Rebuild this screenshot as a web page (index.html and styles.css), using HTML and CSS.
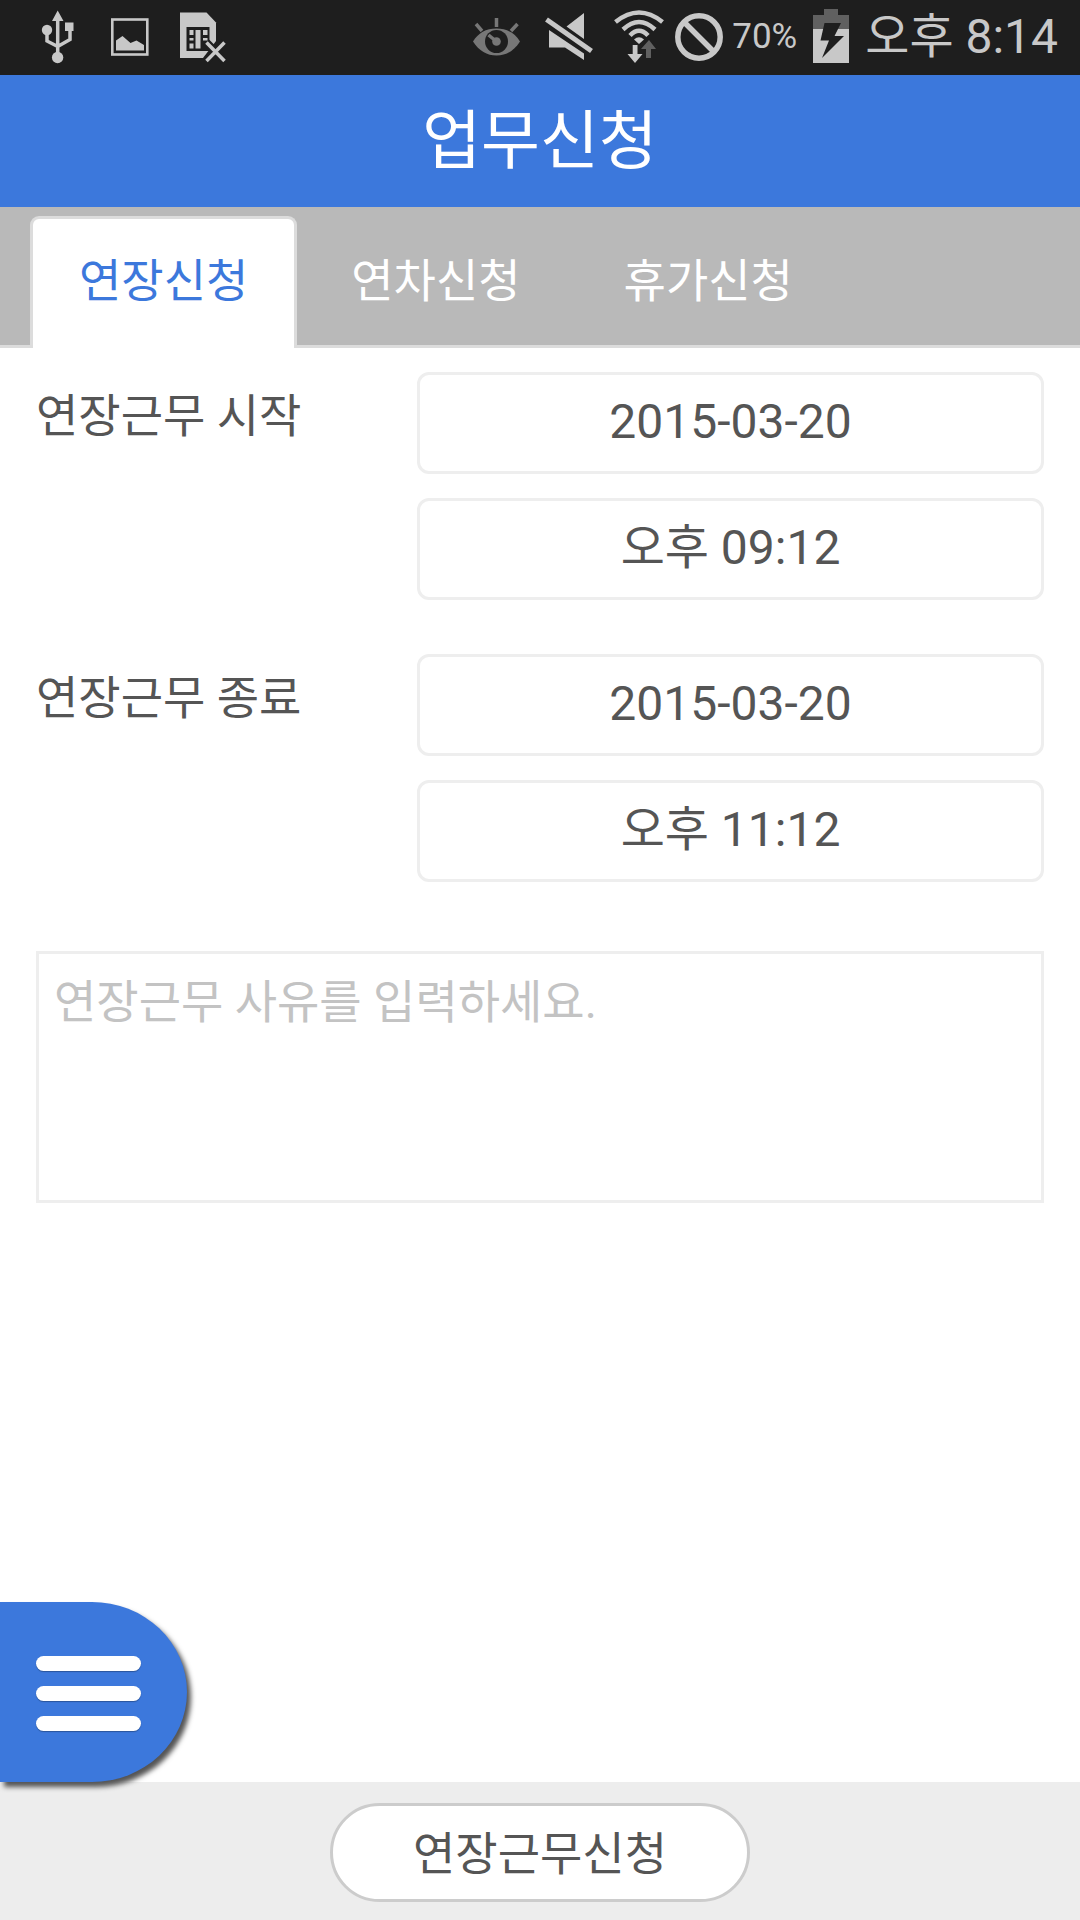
FILE: index.html
```html
<!DOCTYPE html>
<html lang="ko">
<head>
    <meta charset="UTF-8">
    <meta name="viewport" content="width=device-width, initial-scale=1.0">
    <title>업무신청</title>
    <link rel="stylesheet" href="styles.css">
</head>
<body>
    <div class="status-bar">
        <div class="notifications">
            <svg width="39" height="54" viewBox="41 10 39 54" aria-hidden="true">
                <path class="line" d="M57.7 18V54M47 30V41L57.7 46.5M70 29V39.5L57.7 46.5" stroke-width="3.5"/>
                <path class="fill" d="M57.7 10.5L63.5 21H52ZM65 22.5H73.5V31H65Z"/>
                <circle class="fill" cx="47" cy="30" r="5.2"/>
                <circle class="fill" cx="57.6" cy="57.5" r="5.7"/>
            </svg>
            <svg width="38" height="54" viewBox="111 10 38 54" aria-hidden="true">
                <rect class="line" x="112.3" y="19.5" width="35" height="35" stroke-width="2.6"/>
                <path class="fill" d="M116 50.5V40.5L122.5 36L130.5 43L136.5 40.5L144 45V50.5Z"/>
            </svg>
            <svg width="47" height="54" viewBox="180 10 47 54" aria-hidden="true">
                <path class="fill" d="M180 12.5H206.5L216 22.5V41L203 58H180Z"/>
                <path class="hole" d="M186.5 27H209.5V51H186.5Z"/>
                <path class="fill" d="M189.5 30H193.5V35H189.5ZM189.5 38H193.5V40.5H189.5ZM189.5 43.5H193.5V48.5H189.5ZM195.5 30H200.5V48.5H195.5ZM203 30H207.5V35H203ZM203 38H207.5V40.5H203Z"/>
                <path class="hole-line" d="M206.5 42.5L224.5 61M224.5 42.5L206.5 61" stroke-width="8"/>
                <path class="line" d="M206.5 42.5L224.5 61M224.5 42.5L206.5 61" stroke-width="3.5"/>
            </svg>
        </div>
        <div class="system">
            <svg class="icon-eye" width="48" height="54" viewBox="473 10 48 54" aria-hidden="true">
                <path class="dim" d="M474 41.5C479 33 487 28.5 497.5 28.5C508 28.5 516 33 521 41.5C515 51 507 55.5 497.5 55.5C488 55.5 480 51 474 41.5Z"/>
                <circle class="hole" cx="497.5" cy="41.5" r="11.5"/>
                <circle class="dim" cx="497.5" cy="41.5" r="4.3"/>
                <path class="dim-line" d="M497.5 41.5L489.5 35M497.5 18V27M477 24L483 31M518.5 24L512 31" stroke-width="3.5"/>
            </svg>
            <svg class="icon-mute" width="50" height="54" viewBox="545 10 50 54" aria-hidden="true">
                <path class="fill" d="M585 13V39L567.5 26.5ZM550 30L585 53.5V60L566 47.5H550Z"/>
                <path class="line" d="M547.5 19.5L592.5 51" stroke-width="5"/>
            </svg>
            <svg class="icon-wifi" width="50" height="54" viewBox="614 9 50 54" aria-hidden="true">
                <path class="line" d="M615.5 21Q639 2 662.5 21M623 28.5Q639 13.5 655 28.5M630 34.5Q639 25 648 34.5" stroke-width="4.5"/>
                <path class="fill" d="M634 38.5Q639 34 644 38.5L639 43Z"/>
                <path class="dim-arrow" d="M649 39L656 48H651V57H646V48H641Z"/>
                <path class="fill" d="M632.7 44H637.5V53H642.5L635 62L627.5 53H632.7Z"/>
            </svg>
            <svg class="icon-block" width="48" height="54" viewBox="675 9 48 54" aria-hidden="true">
                <circle class="line" cx="699" cy="36" r="21.2" stroke-width="5.5"/>
                <path class="line" d="M684 21L714 51" stroke-width="5.5"/>
            </svg>
            <span class="battery-level">70%</span>
            <svg class="icon-battery" width="36" height="56" viewBox="813 8 36 56" aria-hidden="true">
                <path class="battery-empty" d="M824 8H838V14H849V28H813V14H824Z"/>
                <path class="fill" d="M813 28H849V62H813Z"/>
                <path class="hole" d="M824.5 22H841L834.5 35H844L822 57L829 39.5H820.5Z"/>
            </svg>
            <time class="clock">오후 8:14</time>
        </div>
    </div>

    <header class="title-bar">
        <h1>업무신청</h1>
    </header>

    <nav class="tabs">
        <a class="tab active" href="#overtime">연장신청</a>
        <a class="tab" href="#annual">연차신청</a>
        <a class="tab" href="#vacation">휴가신청</a>
    </nav>

    <form class="request-form" id="overtime">
        <div class="period">
            <label for="start-date">연장근무 시작</label>
            <div class="fields">
                <input class="date" type="text" id="start-date" value="2015-03-20" readonly>
                <input class="time" type="text" id="start-time" value="오후 09:12" aria-label="연장근무 시작 시간" readonly>
            </div>
        </div>
        <div class="period">
            <label for="end-date">연장근무 종료</label>
            <div class="fields">
                <input class="date" type="text" id="end-date" value="2015-03-20" readonly>
                <input class="time" type="text" id="end-time" value="오후 11:12" aria-label="연장근무 종료 시간" readonly>
            </div>
        </div>
        <textarea class="reason" placeholder="연장근무 사유를 입력하세요." aria-label="연장근무 사유"></textarea>
    </form>

    <footer class="bottom-bar">
        <button class="menu-button" type="button" aria-label="메뉴">
            <span></span>
            <span></span>
            <span></span>
        </button>
        <button class="submit-button" type="submit" form="overtime">연장근무신청</button>
    </footer>
</body>
</html>
```

FILE: styles.css
```css
:root {
    --blue: #3c78dc;
    --text: #555;
    --line: #eee;
    --status: #1e1e1e;
    --status-icon: #c8c8c8;
}

* {
    box-sizing: border-box;
}

body {
    margin: 0;
    min-height: 100vh;
    display: flex;
    flex-direction: column;
    background-color: white;
    color: var(--text);
    font-family: Roboto, "Noto Sans CJK KR", sans-serif;
    font-size: 46px;
}

input, textarea, button {
    font-family: inherit;
    color: inherit;
}

/* status bar */
.status-bar {
    height: 75px;
    padding: 0 22px 2px 41px;
    display: flex;
    justify-content: space-between;
    background-color: var(--status);
    color: var(--status-icon);
}

.notifications, .system {
    display: flex;
    align-items: center;
}

.notifications {
    gap: 31px;
}

.icon-eye {
    margin-right: 24px;
}

.icon-mute {
    margin-right: 20px;
}

.icon-wifi {
    margin-right: 11px;
}

.icon-block {
    margin-right: 9px;
}

.icon-battery {
    margin: 0 16px;
}

.fill {
    fill: var(--status-icon);
}

.line, .hole-line, .dim-line {
    fill: none;
    stroke: var(--status-icon);
}

.hole {
    fill: var(--status);
}

.hole-line {
    stroke: var(--status);
}

.dim {
    fill: #777;
}

.dim-line {
    stroke: #777;
}

.dim-arrow, .battery-empty {
    fill: #606060;
}

.battery-level {
    font-size: 35px;
    line-height: 72px;
}

.clock {
    font-size: 48px;
    line-height: 72px;
}

/* title */
.title-bar {
    height: 132px;
    display: flex;
    justify-content: center;
    background-color: var(--blue);
    color: white;
}

.title-bar h1 {
    margin: 0;
    font-size: 64px;
    font-weight: 400;
    line-height: 134px;
}

/* tabs */
.tabs {
    height: 141px;
    padding: 9px 30px 0;
    display: flex;
    gap: 5px;
    background-color: #b9b9b9;
    box-shadow: inset 0 -3px #dcdcdc;
}

.tab {
    padding: 0 46px;
    border: 3px solid transparent;
    border-bottom: 0;
    border-radius: 9px 9px 0 0;
    color: white;
    line-height: 124px;
    text-decoration: none;
}

.tab.active {
    border-color: #dcdcdc;
    background-color: white;
    color: var(--blue);
}

/* form */
.request-form {
    flex: 1;
    padding: 24px 36px;
}

.period {
    margin-bottom: 54px;
    display: flex;
    justify-content: space-between;
}

.period label {
    line-height: 88px;
}

.fields {
    width: 62.2%;
    display: flex;
    flex-direction: column;
    gap: 24px;
}

.fields input {
    width: 100%;
    height: 102px;
    border: 3px solid var(--line);
    border-radius: 12px;
    background-color: white;
    font-size: 48px;
    text-align: center;
}

.fields .date {
    padding: 0 0 4px;
}

/* the hangul font sits lower in its line than Roboto */
.fields .time {
    padding: 0 0 12px;
}

.reason {
    display: block;
    width: 100%;
    height: 252px;
    margin-top: 69px;
    padding: 12px 15px;
    border: 3px solid var(--line);
    background-color: white;
    font-size: 46px;
    line-height: 72px;
    resize: none;
}

.reason::placeholder {
    color: #c3c3c3;
}

/* bottom bar */
.bottom-bar {
    position: relative;
    height: 138px;
    padding-top: 2px;
    display: flex;
    align-items: center;
    justify-content: center;
    background-color: #ededed;
}

.submit-button {
    height: 99px;
    padding: 0 80px 4px;
    border: 3px solid #ccc;
    border-radius: 50px;
    background-color: white;
    font-size: 46px;
}

/* floats over the form, just above the bottom bar */
.menu-button {
    position: absolute;
    left: 0;
    bottom: 100%;
    width: 187px;
    height: 180px;
    padding: 2px 46px 0 36px;
    display: flex;
    flex-direction: column;
    justify-content: center;
    gap: 15px;
    border: 0;
    border-radius: 0 95px 95px 0 / 0 90px 90px 0;
    background-color: var(--blue);
    box-shadow: 4px 5px 5px #555;
}

.menu-button span {
    height: 15px;
    border-radius: 8px;
    background-color: white;
    box-shadow: 0 1px 1px #2a559c;
}
```
